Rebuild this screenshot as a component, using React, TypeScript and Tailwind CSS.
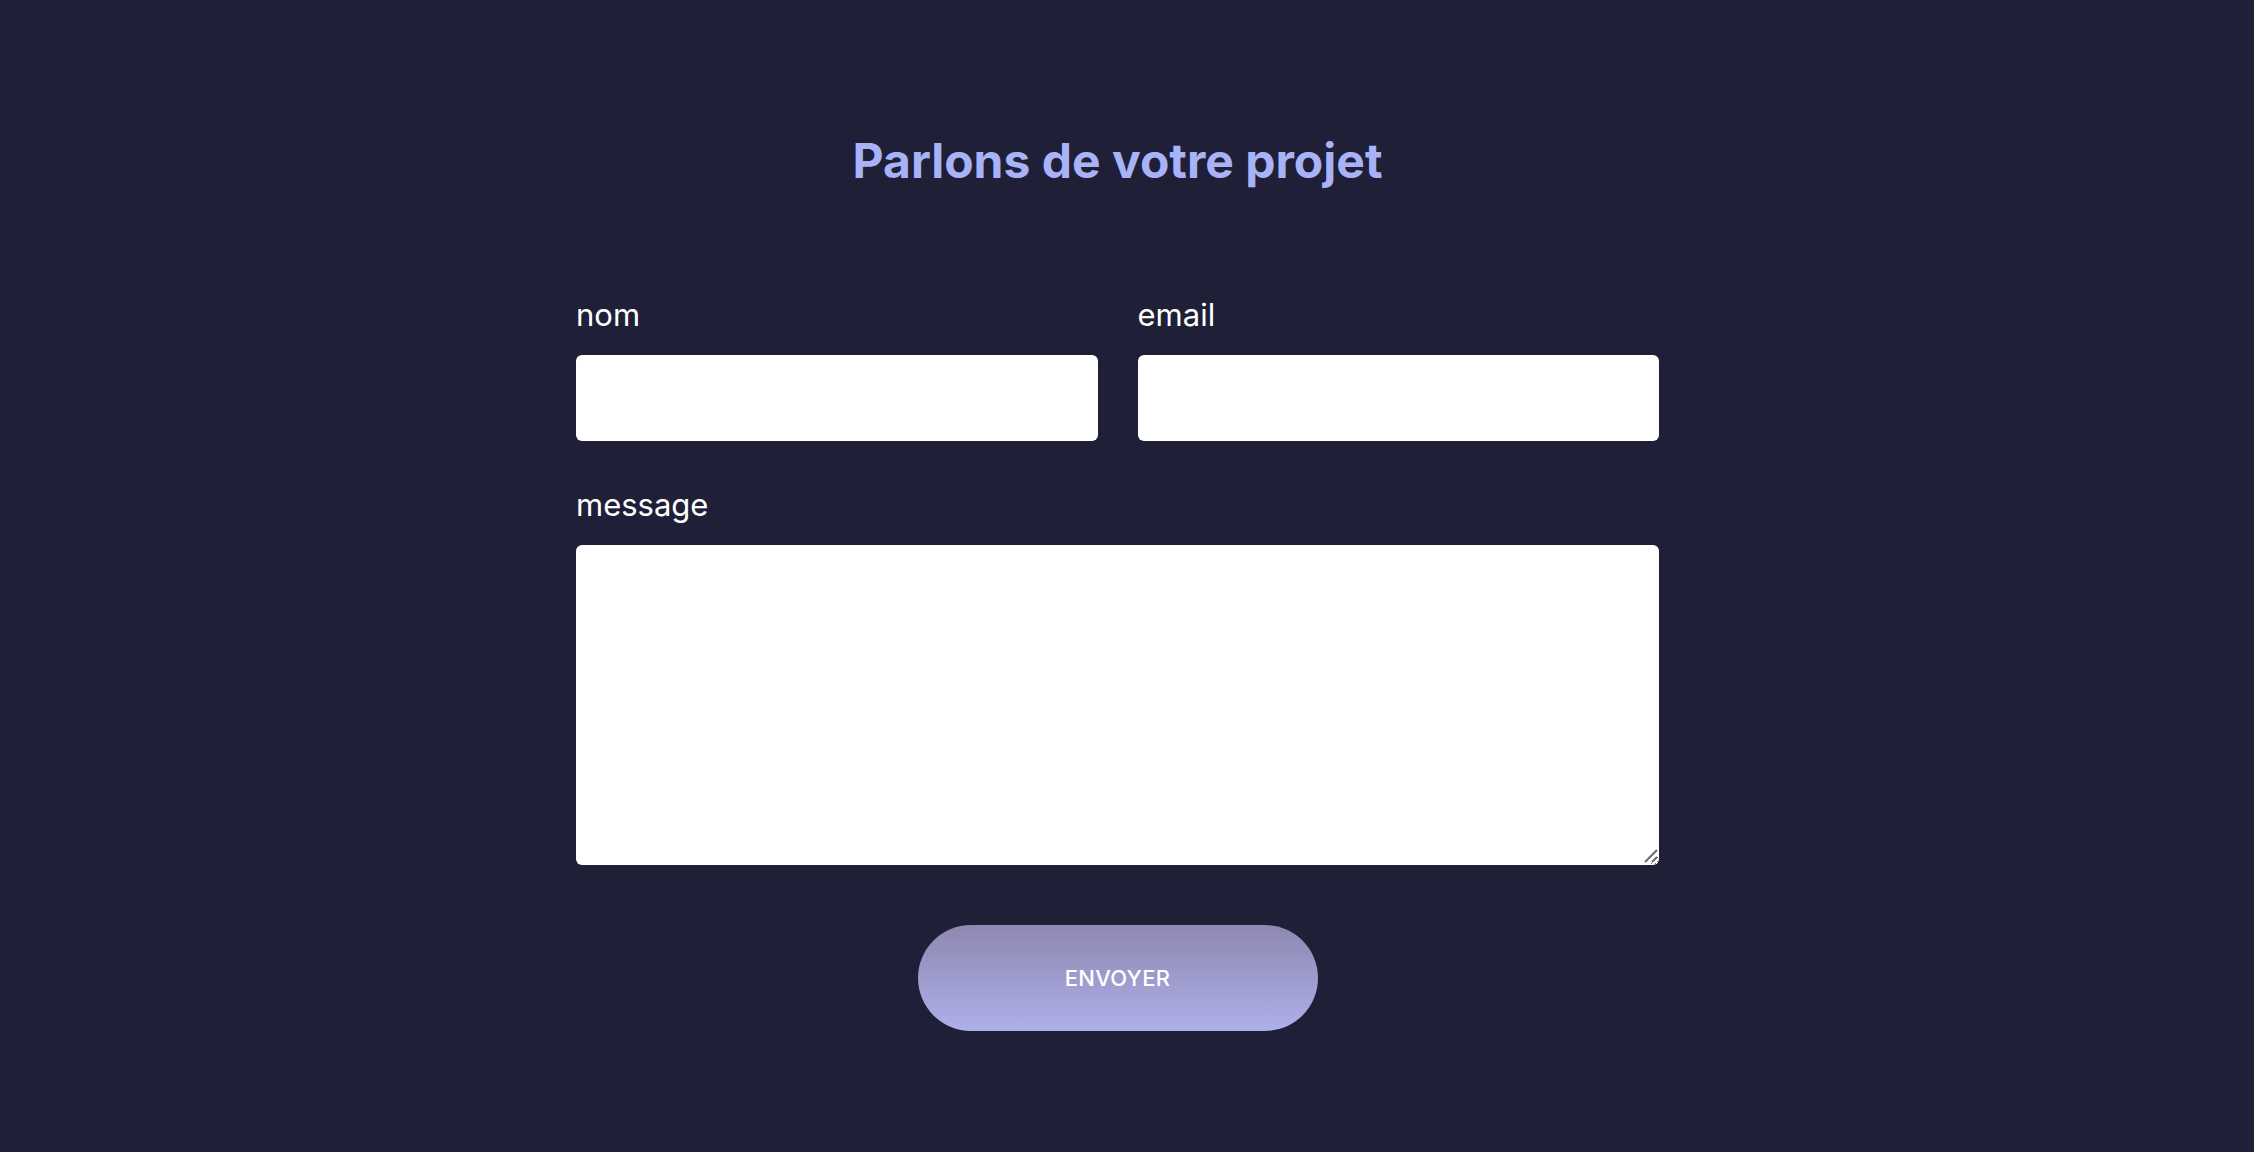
import React from "react";

const labelCls =
  "block text-[31px] leading-none text-white font-normal mb-[25px]";
const fieldCls =
  "block w-full bg-white rounded-[6px] border-0 outline-none text-[20px] text-gray-900 px-4";

export default function App() {
  return (
    <div
      className="min-h-[1152px] w-full bg-[#1f1f37] pr-[19px]"
      style={{ fontFamily: "Inter, 'Noto Sans', sans-serif" }}
    >
      <div className="mx-auto w-[1083px] pt-[137px]">
        <h1 className="text-center text-[48px] leading-none font-bold tracking-normal text-[#a8b2f6]">
          Parlons de votre projet
        </h1>

        <form className="mt-[114px]" onSubmit={(e) => e.preventDefault()}>
          <div className="grid grid-cols-2 gap-x-10">
            <div>
              <label htmlFor="nom" className={labelCls}>
                nom
              </label>
              <input id="nom" type="text" className={`${fieldCls} h-[86px]`} />
            </div>
            <div>
              <label htmlFor="email" className={labelCls}>
                email
              </label>
              <input
                id="email"
                type="email"
                className={`${fieldCls} h-[86px]`}
              />
            </div>
          </div>

          <div className="mt-[48px]">
            <label htmlFor="message" className={labelCls}>
              message
            </label>
            <div className="relative">
              <textarea
                id="message"
                className={`${fieldCls} h-[320px] py-3 resize-y`}
              />
              {/* resize grip */}
              <svg
                className="absolute right-0 bottom-0 pointer-events-none"
                width="18"
                height="18"
                viewBox="0 0 18 18"
              >
                <rect x="0" y="0" width="16" height="16" fill="#ffffff" />
                <path
                  d="M4 15 L16 3 M11 15 L16 10"
                  stroke="#6b6b6b"
                  strokeWidth="2"
                  strokeLinecap="butt"
                />
              </svg>
            </div>
          </div>

          <div className="flex justify-center mt-[60px]">
            <button
              type="submit"
              className="w-[400px] h-[106px] rounded-full bg-gradient-to-b from-[#8e88b2] to-[#aeb0e9] text-white text-[22px] font-medium tracking-[0.3px]"
            >
              ENVOYER
            </button>
          </div>
        </form>
      </div>
    </div>
  );
}
